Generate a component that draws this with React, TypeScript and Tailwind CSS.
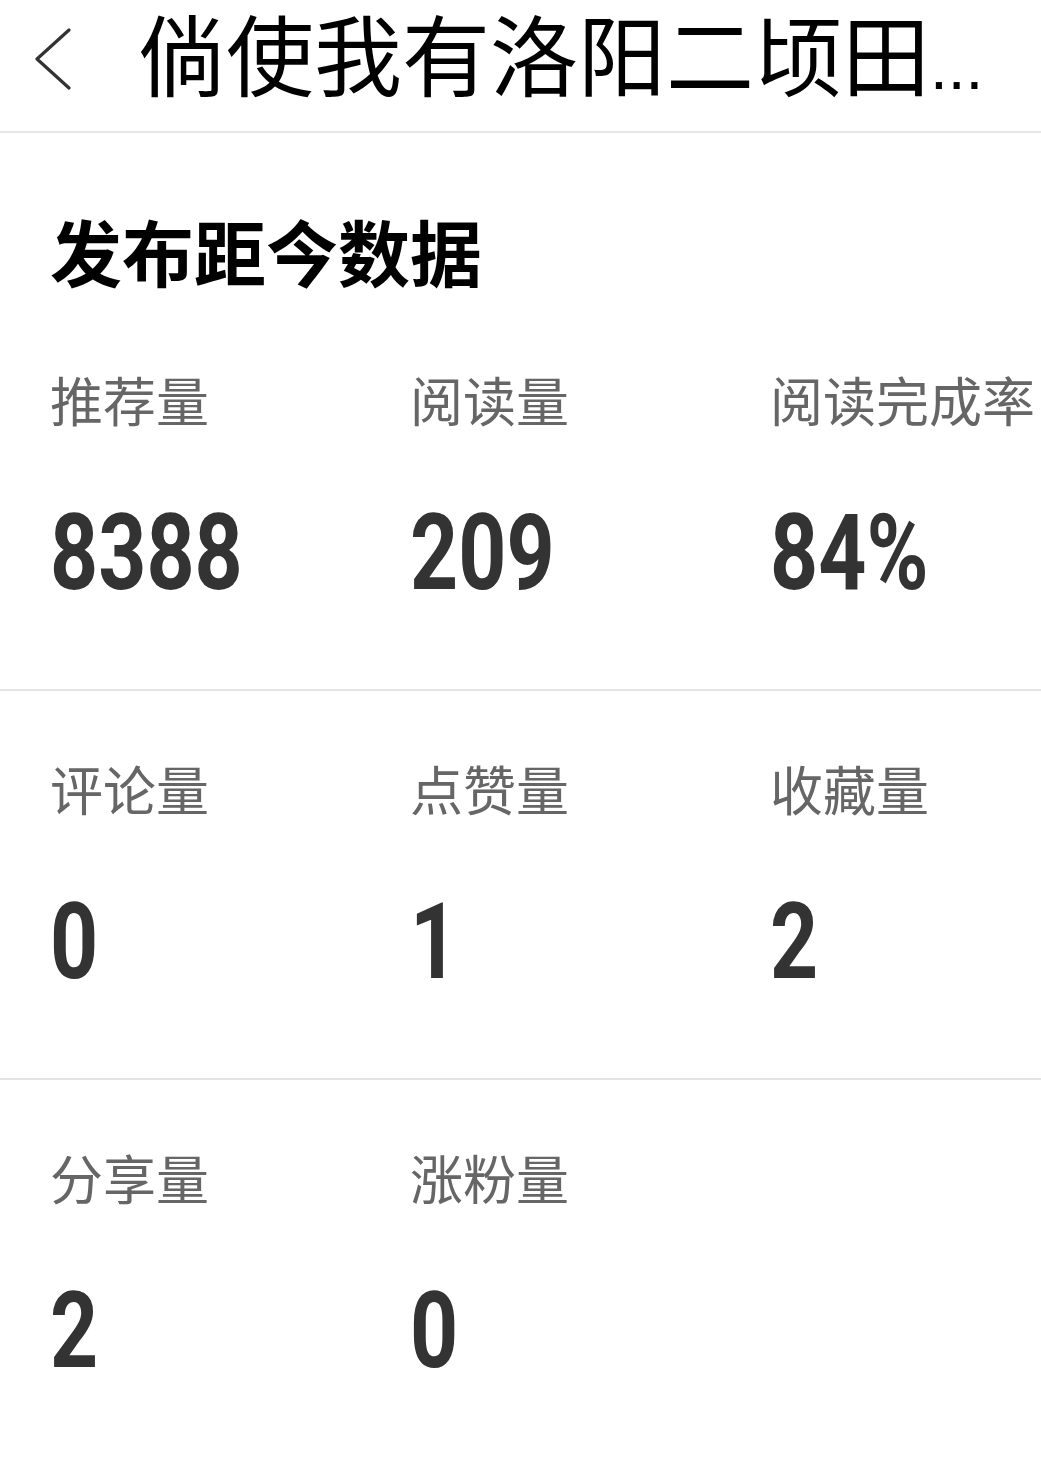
import React from 'react';

const cjk = { fontFamily: '"Noto Sans CJK SC", "Noto Sans", sans-serif' };

type Stat = { label: string; value: string };

const rows: Stat[][] = [
  [
    { label: '推荐量', value: '8388' },
    { label: '阅读量', value: '209' },
    { label: '阅读完成率', value: '84%' },
  ],
  [
    { label: '评论量', value: '0' },
    { label: '点赞量', value: '1' },
    { label: '收藏量', value: '2' },
  ],
  [
    { label: '分享量', value: '2' },
    { label: '涨粉量', value: '0' },
  ],
];

const StatCell: React.FC<Stat> = ({ label, value }) => (
  <div className="min-w-0">
    <div
      className="mt-[71px] h-[53px] text-[53px] leading-[53px] text-[#666666] whitespace-nowrap"
      style={cjk}
    >
      {label}
    </div>
    <div className="mt-[78px] h-[100px] leading-[100px] whitespace-nowrap">
      <span className="inline-block origin-left scale-x-[0.8] font-['Roboto',sans-serif] text-[105px] font-bold text-[#333333]">
        {value}
      </span>
    </div>
  </div>
);

export default function App() {
  return (
    <div className="w-[1041px] min-h-[1469px] bg-white" style={cjk}>
      {/* Top bar */}
      <header className="flex h-[133px] items-center border-b-2 border-[#e6e6e6] pl-[35px] pb-[14px]">
        <svg width="36" height="64" viewBox="0 0 36 64" className="shrink-0">
          <polyline
            points="34,3 2,32 34,61"
            fill="none"
            stroke="#333333"
            strokeWidth="3.2"
            strokeLinecap="round"
            strokeLinejoin="round"
          />
        </svg>
        <h1 className="ml-[67px] whitespace-nowrap text-[88px] leading-[104px] font-normal text-black">
          倘使我有洛阳二顷田
          <span className="font-['Liberation_Sans',sans-serif] text-[64px]">...</span>
        </h1>
      </header>

      {/* Section title */}
      <div className="h-[169px] pl-[50px] pt-[81px]">
        <h2 className="text-[72px] leading-[72px] font-bold text-black">发布距今数据</h2>
      </div>

      {/* Stats grid */}
      {rows.map((row, i) => (
        <div
          key={i}
          className={`grid h-[389px] grid-cols-[360px_360px_1fr] pl-[50px] ${i < rows.length - 1 ? 'border-b-2 border-[#e3e3e3]' : ''}`}
        >
          {row.map((s) => (
            <StatCell key={s.label} label={s.label} value={s.value} />
          ))}
        </div>
      ))}
    </div>
  );
}
